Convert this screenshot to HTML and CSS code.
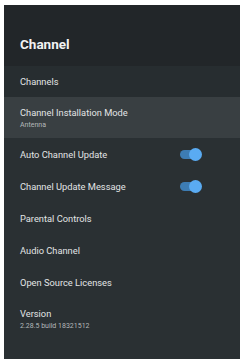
FILE: index.html
```html
<!DOCTYPE html>
<html lang="en">
<head>
	<meta charset="UTF-8">
	<title>Channel</title>
	<link rel="stylesheet" href="styles.css">
</head>
<body>
	<div class="panel">
		<div class="header">Channel</div>

		<div class="item first">Channels</div>

		<div class="item focused">
			<div class="label">Channel Installation Mode</div>
			<div class="sub">Antenna</div>
		</div>

		<div class="item switch-row">
			<div class="label">Auto Channel Update</div>
			<span class="toggle"></span>
		</div>

		<div class="item switch-row">
			<div class="label">Channel Update Message</div>
			<span class="toggle"></span>
		</div>

		<div class="item">Parental Controls</div>
		<div class="item">Audio Channel</div>
		<div class="item">Open Source Licenses</div>

		<div class="item version">
			<div class="label">Version</div>
			<div class="sub">2.28.5 build 18321512</div>
		</div>
	</div>
</body>
</html>
```

FILE: styles.css
```css
body {
	margin: 0;
	background-color: #fff;
	font-family: Roboto, "Liberation Sans", sans-serif;
}

.panel {
	margin: 5px 0 0 4px;
	height: 354px;
	background-color: #2a3033;
	color: #e2e4e5;
	overflow: hidden;
}

.header {
	height: 61px;
	box-sizing: border-box;
	padding: 31px 0 0 16px;
	background-color: #222629;
	color: #f2f2f2;
	font-size: 13.5px;
	font-weight: bold;
}

.item {
	height: 32px;
	padding: 0 16px;
	display: flex;
	flex-direction: column;
	justify-content: center;
	font-size: 9.3px;
}

.first {
	height: 31px;
	background-color: #272d30;
}

.focused {
	height: 41px;
	background-color: #393f42;
}

.sub {
	margin-top: 3px;
	font-size: 7px;
	color: #b4b8ba;
}

.switch-row {
	flex-direction: row;
	align-items: center;
	justify-content: space-between;
}

.toggle {
	position: relative;
	width: 19px;
	height: 9px;
	margin-right: 25px;
	border-radius: 5px;
	background-color: #3d7cb3;
}

.toggle::after {
	content: "";
	position: absolute;
	right: -3px;
	top: -2px;
	width: 13px;
	height: 13px;
	border-radius: 50%;
	background-color: #5aabf2;
}

.version {
	height: 42px;
}
```
